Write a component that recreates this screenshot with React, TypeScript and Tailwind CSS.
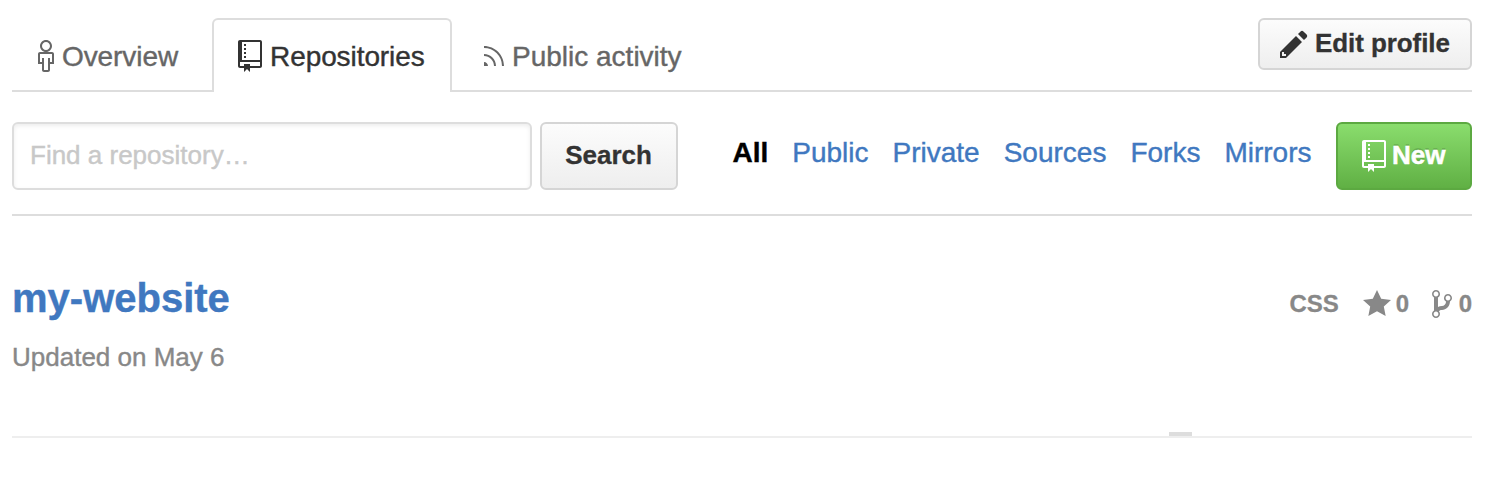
import React from "react";

const PATHS = {
  person:
    "M7 6H1c-.55 0-1 .45-1 1v5h2v3c0 .55.45 1 1 1h2c.55 0 1-.45 1-1v-3h2V7c0-.55-.45-1-1-1zm0 5H6V9H5v6H3V9H2v2H1V7h6v4zm0-8c0-1.66-1.34-3-3-3S1 1.34 1 3s1.34 3 3 3 3-1.34 3-3zM4 5c-1.11 0-2-.89-2-2 0-1.11.89-2 2-2 1.11 0 2 .89 2 2 0 1.11-.89 2-2 2z",
  repo: "M4 9H3V8h1v1zm0-3H3v1h1V6zm0-2H3v1h1V4zm0-2H3v1h1V2zm8-1v12c0 .55-.45 1-1 1H6v2l-1.5-1.5L3 16v-2H1c-.55 0-1-.45-1-1V1c0-.55.45-1 1-1h10c.55 0 1 .45 1 1zm-1 10H1v2h2v-1h3v1h5v-2zm0-10H2v9h9V1z",
  rss: "M2 13H0v-2c1.11 0 2 .89 2 2zM0 3v1a9 9 0 0 1 9 9h1C10 7.48 5.52 3 0 3zm0 4v1c2.75 0 5 2.25 5 5h1c0-3.31-2.69-6-6-6z",
  pencil:
    "M0 12v3h3l8-8-3-3-8 8zm3 2H1v-2h1v1h1v1zm10.3-9.3L12 6 9 3l1.3-1.3a.996.996 0 0 1 1.41 0l1.59 1.59c.39.39.39 1.02 0 1.41z",
  star: "M14 6l-4.9-.64L7 1 4.9 5.36 0 6l3.6 3.26L2.67 14 7 11.67 11.33 14l-.93-4.74L14 6z",
  branch:
    "M10 5c0-1.11-.89-2-2-2a1.993 1.993 0 0 0-1 3.72v.3c-.02.52-.23.98-.63 1.38-.4.4-.86.61-1.38.63-.83.02-1.48.16-2 .45V4.72a1.993 1.993 0 0 0-1-3.72C.88 1 0 1.89 0 3a2 2 0 0 0 1 1.72v6.56c-.59.35-1 .99-1 1.72 0 1.11.89 2 2 2 1.11 0 2-.89 2-2 0-.53-.2-1-.53-1.36.09-.06.48-.41.59-.47.25-.11.56-.17.94-.17 1.05-.05 1.95-.45 2.75-1.25S8.95 7.77 9 6.73h-.02C9.59 6.37 10 5.73 10 5zM2 1.8c.66 0 1.2.55 1.2 1.2 0 .65-.55 1.2-1.2 1.2C1.35 4.2.8 3.65.8 3c0-.65.55-1.2 1.2-1.2zm0 12.41c-.66 0-1.2-.55-1.2-1.2 0-.65.55-1.2 1.2-1.2.65 0 1.2.55 1.2 1.2 0 .65-.55 1.2-1.2 1.2zm6-8c-.66 0-1.2-.55-1.2-1.2 0-.65.55-1.2 1.2-1.2.65 0 1.2.55 1.2 1.2 0 .65-.55 1.2-1.2 1.2z",
};

function Icon({ name, units }: { name: keyof typeof PATHS; units: number }) {
  return (
    <svg
      width={units * 2}
      height={32}
      viewBox={`0 0 ${units} 16`}
      fill="currentColor"
      className="shrink-0"
      aria-hidden="true"
    >
      <path d={PATHS[name]} />
    </svg>
  );
}

const FILTERS = ["Public", "Private", "Sources", "Forks", "Mirrors"];

export default function App() {
  return (
    <div className="h-[490px] bg-white pl-3 pr-9 pt-[18px] font-['Liberation_Sans',Arial,sans-serif] text-[#333]">
      <header className="flex h-[74px] items-start text-[28px] leading-8 text-[#666]">
        <a className="flex h-full w-[200px] items-start gap-2 border-b-2 border-[#ddd] pl-[26px] pt-[22px]">
          <Icon name="person" units={8} />
          <span className="pt-px tracking-[-0.08px] [-webkit-text-stroke:0.4px]">Overview</span>
        </a>
        <a className="flex h-full w-[240px] items-start gap-2 rounded-t-md border-2 border-b-0 border-[#ddd] pl-6 pt-5 text-[#333]">
          <Icon name="repo" units={12} />
          <span className="pt-px tracking-[-0.08px] [-webkit-text-stroke:0.4px]">Repositories</span>
        </a>
        <div className="flex h-full flex-1 items-start justify-between border-b-2 border-[#ddd]">
          <a className="flex items-start gap-2 pl-8 pt-[22px]">
            <Icon name="rss" units={10} />
            <span className="pt-px [-webkit-text-stroke:0.4px]">Public activity</span>
          </a>
          <button className="flex h-[52px] w-[214px] items-start gap-[7px] rounded-md border-2 border-[#d5d5d5] bg-linear-to-b from-[#fcfcfc] to-[#eee] pl-5 pt-2 text-[26px] font-bold leading-[30px] text-[#333]">
            <Icon name="pencil" units={14} />
            <span className="tracking-[-0.08px] [-webkit-text-stroke:0.3px]">Edit profile</span>
          </button>
        </div>
      </header>

      <section className="flex h-[124px] items-start border-b-2 border-[#ddd] pt-[30px]">
        <input
          type="text"
          placeholder="Find a repository…"
          className="h-[68px] w-[520px] rounded-md border-2 border-[#ddd] px-4 pb-0.5 text-[26px] shadow-[inset_0_2px_4px_rgba(0,0,0,0.075)] outline-none [-webkit-text-stroke:0.4px] placeholder:text-[#c8c8c8]"
        />
        <button className="ml-2 h-[68px] w-[138px] rounded-md border-2 border-[#d5d5d5] bg-linear-to-b from-[#fcfcfc] to-[#eee] pb-0.5 pr-px text-[26px] font-bold [-webkit-text-stroke:0.3px]">
          Search
        </button>
        <nav className="ml-auto flex gap-6 pt-[15px] text-[28px] leading-8 text-[#4078c0] [-webkit-text-stroke:0.4px]">
          <a className="font-bold text-black">All</a>
          {FILTERS.map((f) => (
            <a key={f}>{f}</a>
          ))}
        </nav>
        <button className="ml-[24.5px] flex h-[68px] w-[136px] items-start gap-1.5 rounded-md border-2 border-[#5ca941] bg-linear-to-b from-[#8add6d] to-[#60b044] pl-6 pt-4 text-[26px] font-bold leading-[30px] text-white [text-shadow:0_-2px_0_rgba(0,0,0,0.15)]">
          <Icon name="repo" units={12} />
          <span className="[-webkit-text-stroke:0.5px]">New</span>
        </button>
      </section>

      <article className="flex h-[216px] items-start justify-between pt-[58px]">
        <div>
          <h3 className="text-[40px] font-bold leading-[48px] text-[#4078c0] [-webkit-text-stroke:0.4px]">my-website</h3>
          <p className="mt-5 text-[26px] leading-[30px] text-[#888] [-webkit-text-stroke:0.4px]">Updated on May 6</p>
        </div>
        <div className="flex pt-[14px] text-2xl font-bold leading-8 text-[#888]">
          <span className="[-webkit-text-stroke:0.3px]">CSS</span>
          <span className="ml-6 flex gap-[5px]">
            <Icon name="star" units={14} />
            <span className="[-webkit-text-stroke:0.3px]">0</span>
          </span>
          <span className="ml-[22.5px] flex gap-[7px]">
            <Icon name="branch" units={10} />
            <span className="[-webkit-text-stroke:0.3px]">0</span>
          </span>
        </div>
      </article>
      <div className="flex h-1.5 flex-col">
        <div className="ml-[1157px] h-1 w-[23px] bg-[#ddd]" />
        <div className="h-0.5 bg-[#eee]" />
      </div>
    </div>
  );
}
